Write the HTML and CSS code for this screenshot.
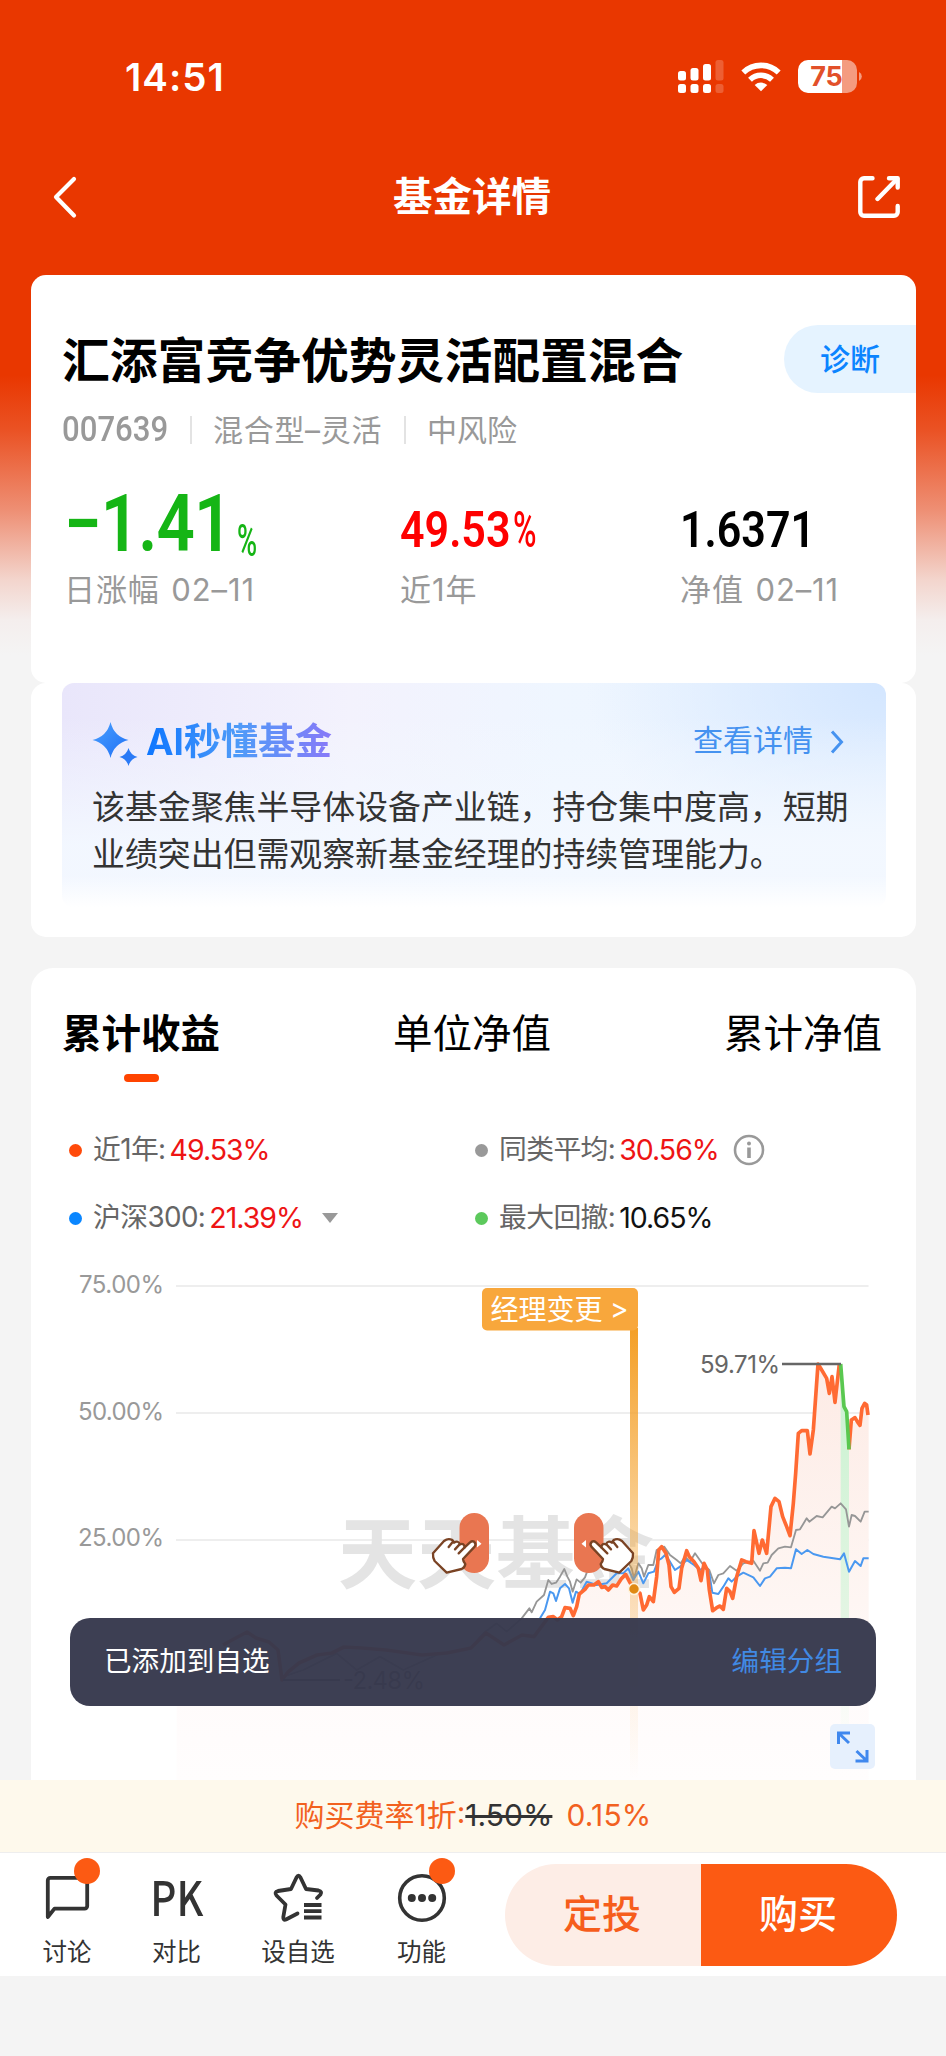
FILE: index.html
```html
<!DOCTYPE html>
<html lang="zh-CN">
<head>
    <meta charset="UTF-8">
    <meta name="viewport" content="width=device-width, initial-scale=1.0">
    <title>基金详情</title>
    <link rel="stylesheet" href="styles.css">
</head>
<body>
    <header class="status-bar">
        <span class="time">14:51</span>
        <svg class="status-icons" width="190" height="40" viewBox="675 57 190 40">
            <g fill="#fff">
                <rect x="678" y="71" width="8" height="9.5" rx="2.5"/>
                <rect x="690.5" y="68" width="8" height="12.5" rx="2.5"/>
                <rect x="703" y="64" width="8" height="16.5" rx="2.5"/>
                <rect x="678" y="84" width="8" height="9" rx="2.5"/>
                <rect x="690.5" y="84" width="8" height="9" rx="2.5"/>
                <rect x="703" y="84" width="8" height="9" rx="2.5"/>
            </g>
            <g fill="#fff" opacity="0.2">
                <rect x="715.5" y="60" width="8" height="20.5" rx="2.5"/>
                <rect x="715.5" y="84" width="8" height="9" rx="2.5"/>
            </g>
            <!-- wifi -->
            <g fill="none" stroke="#fff" stroke-width="5.6">
                <path d="M743.3 72.5 a25.5 25.5 0 0 1 35.4 0"/>
                <path d="M750 79.7 a16 16 0 0 1 22 0"/>
            </g>
            <path d="M761 91.2 l-6.3 -6.2 a9.5 9.5 0 0 1 12.6 0 z" fill="#fff"/>
            <!-- battery -->
            <path d="M808 60 h34 v33 h-34 a10 10 0 0 1 -10 -10 v-13 a10 10 0 0 1 10 -10z" fill="#fff"/>
            <path d="M842 60 h5 a10 10 0 0 1 10 10 v13 a10 10 0 0 1 -10 10 h-5z" fill="#fff" opacity="0.5"/>
            <path d="M859 72 a5 5 0 0 1 0 9z" fill="#fff" opacity="0.5"/>
            <text x="826.5" y="86" text-anchor="middle" class="battery-text">75</text>
        </svg>
    </header>

    <nav class="nav-bar">
        <svg width="42" height="46" viewBox="0 0 42 46">
            <path d="M26 5 L8 23 L26 41.5" fill="none" stroke="#fff" stroke-width="4.2" stroke-linecap="round" stroke-linejoin="round"/>
        </svg>
        <h1>基金详情</h1>
        <svg width="42" height="42" viewBox="0 0 42 42">
            <g fill="none" stroke="#fff" stroke-width="4.4" stroke-linecap="round" stroke-linejoin="round">
                <path d="M14.5 2.3 H6 a3.7 3.7 0 0 0 -3.7 3.7 V36 a3.7 3.7 0 0 0 3.7 3.7 H36 a3.7 3.7 0 0 0 3.7 -3.7 V30"/>
                <path d="M31 2.3 H39.7 V11.5"/>
                <path d="M39 3 L19.5 23"/>
            </g>
        </svg>
    </nav>

    <section class="card fund-card">
        <div class="fund-head">
            <h2>汇添富竞争优势灵活配置混合</h2>
            <span class="diagnose">诊断</span>
        </div>
        <div class="fund-meta">
            <span class="code">007639</span>
            <i class="sep"></i>
            <span class="type">混合型–灵活</span>
            <i class="sep"></i>
            <span class="risk">中风险</span>
        </div>
        <div class="stats">
            <div>
                <div class="value big"><span class="num">−1.41</span><span class="pct">%</span></div>
                <div class="label">日涨幅 02–11</div>
            </div>
            <div>
                <div class="value up"><span class="num">49.53</span><span class="pct">%</span></div>
                <div class="label">近1年</div>
            </div>
            <div>
                <div class="value"><span class="num">1.6371</span></div>
                <div class="label">净值 02–11</div>
            </div>
        </div>
    </section>

    <section class="card ai-card">
        <div class="ai-box">
            <div class="ai-head">
                <svg width="48" height="48" viewBox="0 0 48 48">
                    <defs>
                        <linearGradient id="spark" x1="0" y1="0" x2="1" y2="1">
                            <stop offset="0" stop-color="#4aa0ff"/>
                            <stop offset="1" stop-color="#1f70f5"/>
                        </linearGradient>
                    </defs>
                    <path d="M18.5 1 Q22 15.5 36.5 19 Q22 22.5 18.5 37 Q15 22.5 0.5 19 Q15 15.5 18.5 1z" fill="url(#spark)"/>
                    <path d="M36.5 27 Q38.5 34 45.5 36 Q38.5 38 36.5 45 Q34.5 38 27.5 36 Q34.5 34 36.5 27z" fill="#2a7af6"/>
                </svg>
                <h3>AI秒懂基金</h3>
                <a>查看详情</a>
                <svg class="arrow" width="14" height="26" viewBox="0 0 14 26">
                    <path d="M2 2.5 L11.5 13 L2 23.5" fill="none" stroke="#4592f0" stroke-width="3"/>
                </svg>
            </div>
            <p>该基金聚焦半导体设备产业链，持仓集中度高，短期业绩突出但需观察新基金经理的持续管理能力。</p>
        </div>
    </section>

    <section class="card chart-card">
        <div class="tabs">
            <span class="tab active">累计收益</span>
            <span class="tab">单位净值</span>
            <span class="tab">累计净值</span>
        </div>
        <div class="legend">
            <div><i class="dot orange"></i>近1年:<b class="up">49.53%</b></div>
            <div><i class="dot gray"></i>同类平均:<b class="up">30.56%</b>
                <svg class="info" width="32" height="32" viewBox="0 0 32 32">
                    <circle cx="16" cy="16" r="14" fill="none" stroke="#999" stroke-width="2.6"/>
                    <circle cx="16" cy="9.5" r="2" fill="#999"/>
                    <path d="M16 13.5 V24" stroke="#999" stroke-width="3.6"/>
                </svg>
            </div>
            <div><i class="dot blue"></i>沪深300:<b class="up">21.39%</b><i class="caret"></i></div>
            <div><i class="dot green"></i>最大回撤:<b>10.65%</b></div>
        </div>

        <div class="chart">
            <svg width="885" height="540" viewBox="31 1240 885 540">
                <defs>
                    <linearGradient id="area" gradientUnits="userSpaceOnUse" x1="0" y1="370" x2="0" y2="1620">
                        <stop offset="0" stop-color="#fdebe5"/>
                        <stop offset="0.57" stop-color="#fef6f3"/>
                        <stop offset="0.8" stop-color="#fffbfb"/>
                        <stop offset="1" stop-color="#fffdfd"/>
                    </linearGradient>
                    <linearGradient id="pole" x1="0" y1="0" x2="0" y2="1">
                        <stop offset="0" stop-color="#f49f26"/>
                        <stop offset="0.5" stop-color="#f49f26" stop-opacity="0.4"/>
                        <stop offset="0.82" stop-color="#f49f26" stop-opacity="0.08"/>
                        <stop offset="1" stop-color="#f49f26" stop-opacity="0"/>
                    </linearGradient>
                    <linearGradient id="drop" x1="0" y1="0" x2="0" y2="1">
                        <stop offset="0" stop-color="#c9f2d0"/>
                        <stop offset="0.6" stop-color="#e3f5e3"/>
                        <stop offset="1" stop-color="#f8fff8" stop-opacity="0"/>
                    </linearGradient>
                </defs>

                <!-- grid -->
                <g stroke="#eee" stroke-width="2">
                    <path d="M176 1286 H868.5 M176 1413 H868.5 M176 1540 H868.5"/>
                </g>
                <g class="axis" text-anchor="end">
                    <text x="164" y="1292.5" textLength="85">75.00%</text>
                    <text x="164" y="1419.5" textLength="86">50.00%</text>
                    <text x="164" y="1546" textLength="86">25.00%</text>
                </g>

                <text x="338" y="1583" class="watermark" textLength="316">天天基金</text>

                <!-- curves, 3 units per pixel -->
                <g transform="translate(470 1240) scale(0.33333)" fill="none" stroke-linejoin="round">
                    <path fill="url(#area)" d="M-880 1270 L-741 1215 -714 1200 -669 1176 -603 1206 -564 1320 -510 1270 -414 1239 -144 1245 3 1224 48 1179 102 1215 192 1190 235 1132 250 1130 275 1130 285 1103 310 1127 328 1062 355 1035 385 1025 415 1050 467 1003 492 1048 510 1060 520 1110 538 1070 550 1085 566 930 575 920 597 975 603 1040 613 1057 627 1045 650 932 685 985 693 1022 702 970 728 1112 750 1098 760 1108 770 1045 788 1075 815 960 845 970 852 872 867 940 877 900 890 940 903 800 915 775 938 830 960 887 985 580 1012 572 1020 642 1044 372 1070 415 1078 460 1086 410 1095 487 1110 372 1122 500 1137 628 1144 540 1170 556 1184 490 1196 525 V1620 H-880z"/>
                    <path fill="url(#drop)" d="M1112 400 L1122 500 1130 515 1137 628 V1600 H1112z"/>
                    <polyline stroke="#969696" stroke-width="5.5" points="-560,1310 -500,1290 -400,1240 -340,1290 -270,1250 -200,1290 -90,1240 0,1225 40,1180 80,1150 110,1175 155,1135 178,1105 185,1117 200,1085 222,1065 235,1020 245,1032 258,1028 270,1010 283,987 292,1010 300,1025 308,1055 320,1018 332,1028 345,1012 355,985 400,980 440,970 470,960 485,985 492,1015 505,970 515,985 522,1010 535,975 550,975 560,930 583,920 600,945 620,960 632,970 645,950 660,965 675,940 700,975 718,990 732,1030 745,1005 760,1000 780,978 800,992 820,970 850,962 870,992 880,970 893,968 905,945 925,925 945,920 963,922 978,870 990,868 1010,835 1018,845 1040,828 1058,832 1085,800 1095,805 1112,790 1128,808 1137,860 1145,825 1155,828 1172,845 1184,815 1196,815"/>
                    <polyline stroke="#4a98f0" stroke-width="6" points="210,1135 225,1110 240,1055 250,1060 258,1083 270,1045 285,1032 297,1045 308,1088 318,1055 330,1062 350,1025 380,1035 410,1030 440,1000 460,1000 475,985 490,1020 505,995 520,1030 535,1000 552,995 565,960 575,955 585,945 600,965 615,990 630,980 650,960 672,975 690,990 705,980 718,1000 727,1058 745,1062 760,1040 775,1015 785,1025 800,1010 820,998 850,1012 870,1038 885,1015 900,1010 920,985 945,983 963,985 978,928 995,942 1012,930 1030,942 1060,950 1110,958 1122,940 1137,995 1155,963 1172,978 1180,955 1196,955"/>
                    <polyline stroke="#ff6a33" stroke-width="11" points="-741,1215 -714,1200 -669,1176 -642,1194 -603,1206 -576,1230 -564,1320 -546,1296 -513,1269 -459,1245 -414,1239 -378,1221 -324,1224 -252,1230 -144,1245 -69,1239 3,1224 48,1179 102,1215 156,1185 192,1190 235,1132 250,1130 262,1140 275,1130 285,1103 300,1105 310,1127 320,1100 328,1062 345,1048 355,1035 372,1035 385,1025 395,1042 405,1040 415,1050 428,1035 440,1038 455,1015 467,1003 480,1028 492,1048 510,1060 520,1110 530,1095 538,1070 550,1085 560,1010 566,930 575,920 588,940 597,975 603,1040 613,1057 627,1045 635,985 650,932 658,950 672,965 685,985 693,1022 702,970 712,990 718,1050 728,1112 740,1103 750,1098 760,1108 770,1045 780,1055 788,1075 800,1010 815,960 828,965 845,970 852,872 867,940 877,900 890,940 903,800 915,775 927,785 938,830 950,860 960,887 970,790 977,700 985,580 995,572 1012,572 1020,642 1030,570 1044,372 1052,385 1070,415 1078,460 1086,410 1095,487 1108,372"/>
                    <polyline stroke="#ff6a33" stroke-width="11" points="1137,628 1144,540 1155,533 1162,545 1170,556 1176,505 1184,490 1190,495 1194,525"/>
                    <polyline stroke="#5ac850" stroke-width="11" points="1112,372 1118,450 1122,500 1130,515 1137,628"/>
                </g>

                <path d="M782 1364 H841" stroke="#666" stroke-width="2.4"/>
                <text x="700" y="1372.5" class="peak" textLength="80">59.71%</text>
                <path d="M283 1680 H340" stroke="#666" stroke-width="2"/>
                <text x="343" y="1689" class="peak" textLength="82">-2.48%</text>

                <!-- manager change flag -->
                <rect x="630" y="1328" width="8" height="452" fill="url(#pole)"/>
                <rect x="482" y="1288" width="156" height="42.5" rx="5" fill="#f8a73c"/>
                <text x="490.5" y="1319.5" class="flag">经理变更</text>
                <text x="610" y="1319" class="flag">&gt;</text>
                <circle cx="634" cy="1589" r="5.5" fill="#e08a12" stroke="#fff3dc" stroke-width="1.6"/>

                <!-- drag hints -->
                <rect x="459.5" y="1513" width="29.5" height="60" rx="14.7" fill="#e97651"/>
                <rect x="574" y="1513" width="29.5" height="60" rx="14.7" fill="#e97651"/>
                <path d="M477 1540 l4.5 3.8 -4.5 3.8z M586 1540 l-4.5 3.8 4.5 3.8z" fill="#fff"/>
                <g fill="#fff" stroke="#7a4324" stroke-width="7" stroke-linejoin="round" stroke-linecap="round">
                    <g transform="translate(330 1490) scale(0.33333)">
                        <path d="M432 155 Q440 162 434 170 L399 207 Q400 216 406 222 Q404 234 395 237 L350 248 L314 213 Q308 204 309 190 L342 153 Q352 145 362 148 Q370 150 372 158 Q384 150 390 163 Q402 158 404 172 L420 157 Q426 152 432 155z"/>
                        <path d="M368 156 L356 171 M388 164 L375 178 M404 172 L386 190" fill="none"/>
                    </g>
                    <g transform="translate(736 1490) scale(-0.33333 0.33333)">
                        <path d="M432 155 Q440 162 434 170 L399 207 Q400 216 406 222 Q404 234 395 237 L350 248 L314 213 Q308 204 309 190 L342 153 Q352 145 362 148 Q370 150 372 158 Q384 150 390 163 Q402 158 404 172 L420 157 Q426 152 432 155z"/>
                        <path d="M368 156 L356 171 M388 164 L375 178 M404 172 L386 190" fill="none"/>
                    </g>
                </g>
            </svg>

            <div class="expand">
                <svg width="45" height="45" viewBox="0 0 45 45">
                    <g fill="none" stroke="#4088ee" stroke-width="3">
                        <path d="M8.5 20 V9 H20 M8.5 9 L19 19"/>
                        <path d="M37 26 V37 H25.5 M37 37 L26.5 27"/>
                    </g>
                </svg>
            </div>
            <div class="toast">
                <span>已添加到自选</span>
                <a>编辑分组</a>
            </div>
        </div>
    </section>

    <div class="fee-bar">购买费率1折:<s>1.50%</s><span>0.15%</span></div>

    <footer class="bottom-bar">
        <div class="actions">
            <div class="action">
                <svg width="50" height="50" viewBox="42 1873 50 50">
                    <path d="M47.8 1917 V1880.5 a2.6 2.6 0 0 1 2.6 -2.6 H84.6 a2.6 2.6 0 0 1 2.6 2.6 V1906 a2.6 2.6 0 0 1 -2.6 2.6 H54.5z" fill="none" stroke="#333" stroke-width="3.8" stroke-linejoin="round"/>
                </svg>
                <i class="badge"></i>
                <span>讨论</span>
            </div>
            <div class="action">
                <div class="pk">PK</div>
                <span>对比</span>
            </div>
            <div class="action">
                <svg width="54" height="50" viewBox="272 1873 54 50">
                    <g fill="none" stroke="#333" stroke-width="3.8" stroke-linecap="round" stroke-linejoin="round">
                        <path d="M298.5 1913.5 L287 1919.5 Q284 1920.5 284.3 1917 L286.5 1904.5 L277.5 1895.5 Q275 1892 279 1891 L292 1889 L297.5 1877.5 Q299.5 1874 301.5 1877.5 L307 1889 L319.5 1890.5 Q323.5 1891.5 321.5 1894.5 L318 1898"/>
                    </g>
                    <path d="M305 1905 H322.5 M305 1911.2 H322.5 M305 1917.5 H322.5" stroke="#333" stroke-width="3.8"/>
                </svg>
                <span>设自选</span>
            </div>
            <div class="action">
                <svg width="50" height="50" viewBox="0 0 50 50">
                    <circle cx="25" cy="25" r="22.3" fill="none" stroke="#333" stroke-width="3.6"/>
                    <g fill="#333"><circle cx="14.8" cy="25" r="4"/><circle cx="25" cy="25" r="4"/><circle cx="35.2" cy="25" r="4"/></g>
                </svg>
                <i class="badge"></i>
                <span>功能</span>
            </div>
        </div>
        <div class="buttons">
            <button class="plan">定投</button>
            <button class="buy">购买</button>
        </div>
    </footer>
</body>
</html>
```
FILE: styles.css
```css
* {
    box-sizing: border-box;
}

body {
    margin: 0;
    width: 946px;
    height: 2056px;
    overflow: hidden;
    font-family: "Inter", "Noto Sans CJK SC", sans-serif;
    line-height: 1.2;
    color: #000;
    background: #f4f4f4 linear-gradient(to bottom, #e93700 0, #e93700 375px, #ea5224 430px, #ee8f74 510px, #f3d5cd 580px, #f4eeed 620px, #f4f4f4 655px) no-repeat;
}

h1, h2, h3, p {
    margin: 0;
}

svg {
    display: block;
}

/* status bar */
.status-bar {
    height: 154px;
    padding: 0 81px 0 125px;
    display: flex;
    align-items: center;
    justify-content: space-between;
}

.time {
    color: #fff;
    font-size: 38.5px;
    font-weight: 600;
    line-height: 40px;
    letter-spacing: 1px;
}

.battery-text {
    font-family: "Inter", sans-serif;
    font-size: 27px;
    font-weight: 700;
    fill: #e2502a;
}

/* title bar */
.nav-bar {
    height: 86px;
    padding: 0 46px 0 48px;
    display: flex;
    align-items: center;
    justify-content: space-between;
}

.nav-bar h1 {
    margin-right: 4px;
    color: #fff;
    font-size: 39.5px;
    font-weight: 700;
    line-height: 48px;
}

.card {
    width: 885px;
    margin-left: 31px;
    background: #fff;
    border-radius: 15px;
}

/* fund summary */
.fund-card {
    margin-top: 35px;
    height: 408px;
    padding: 50px 0 0 31px;
}

.fund-head {
    display: flex;
    height: 68px;
    align-items: center;
    justify-content: space-between;
}

.fund-head h2 {
    font-size: 47.8px;
    font-weight: 700;
    line-height: 60px;
    padding-top: 4px;
}

.diagnose {
    width: 132px;
    height: 68px;
    line-height: 68px;
    text-align: center;
    font-size: 30px;
    font-weight: 500;
    color: #0b84ff;
    background: #e5f3ff;
    border-radius: 34px 0 0 34px;
}

.fund-meta {
    display: flex;
    align-items: center;
    height: 40px;
    margin-top: 17px;
    font-size: 30px;
    color: #999;
}

.code {
    width: 128px;
    font-family: Roboto, sans-serif;
    font-size: 35px;
    font-weight: 500;
    transform: scaleX(0.89);
    transform-origin: left;
}

.sep {
    width: 2px;
    height: 28px;
    margin-right: 21px;
    background: #e3e3e3;
}

.type {
    width: 191px;
    letter-spacing: 0.7px;
}

.stats {
    display: grid;
    grid-template-columns: 336px 280px auto;
    margin-top: 36px;
    padding-left: 2px;
}

.value {
    display: flex;
    height: 72px;
    line-height: 88px;
    font-family: Roboto, sans-serif;
    font-size: 50px;
    font-weight: 600;
}

.value .num,
.value .pct {
    transform: scaleX(0.86);
    transform-origin: left;
}

.value.up {
    color: #fe0000;
}

.value.up .num {
    width: 113px;
}

.value.up .pct {
    font-weight: 500;
    transform: scaleX(0.64);
}

.value.big {
    color: #15b515;
    font-size: 80px;
    line-height: 76px;
}

.value.big .num {
    width: 173px;
    letter-spacing: -1px;
    transform: scaleX(0.84);
}

.value.big .pct {
    font-size: 44px;
    font-weight: 500;
    line-height: 111px;
    transform: scaleX(0.62);
}

.label {
    margin-top: 10px;
    font-size: 31px;
    line-height: 44px;
    color: #999;
    letter-spacing: 0.9px;
    word-spacing: 2px;
}

/* ai summary */
.ai-card {
    height: 254px;
    padding: 0 30px 0 31px;
}

.ai-box {
    height: 224px;
    padding: 33px 26px 0 30px;
    border-radius: 12px;
    background:
        linear-gradient(to bottom, rgba(255, 255, 255, 0) 86%, #fff 100%),
        linear-gradient(to bottom, rgba(243, 248, 255, 0) 15%, rgba(243, 248, 255, 0.95) 72%),
        radial-gradient(ellipse 300px 200px at 100% 0, #d3e6ff, rgba(211, 230, 255, 0)),
        linear-gradient(to right, #e9e6fb 0, #f3f2fd 35%, #eff6ff 60%, #edf5ff 100%);
}

.ai-head {
    display: flex;
    align-items: center;
    height: 52px;
}

.ai-head > svg:first-child {
    margin-top: 6px;
}

.ai-head h3 {
    margin: 0 auto 0 6px;
    font-size: 37px;
    font-weight: 700;
    line-height: 52px;
    background: linear-gradient(to right, #0d76ff 0, #4f9bf8 50%, #8879f8 100%);
    -webkit-background-clip: text;
    background-clip: text;
    color: transparent;
}

.ai-head a {
    margin-top: -4px;
    font-size: 30px;
    color: #4592f0;
}

.ai-head .arrow {
    margin: -1px 16px 0 17px;
}

.ai-box p {
    margin-top: 16px;
    font-size: 32.9px;
    line-height: 47px;
    color: #333;
}

/* performance chart */
.chart-card {
    height: 812px;
    margin-top: 31px;
    border-radius: 22px 22px 0 0;
}

.tabs {
    display: flex;
    justify-content: space-between;
    height: 132px;
    padding: 40px 34px 0 31px;
    font-size: 39.5px;
    line-height: 52px;
}

.tab.active {
    font-weight: 700;
}

.tab.active::after {
    content: "";
    display: block;
    width: 35px;
    height: 8px;
    margin: 14px auto 0;
    border-radius: 4px;
    background: #ff4400;
}

.legend {
    display: grid;
    grid-template-columns: 406px auto;
    grid-auto-rows: 68px;
    height: 140px;
    padding: 16px 0 0 38px;
    font-size: 27.8px;
    letter-spacing: -0.6px;
    color: #666;
}

.legend div {
    display: flex;
    align-items: center;
}

.legend b {
    margin-left: 4px;
    font-weight: 400;
    font-size: 28.5px;
    letter-spacing: -1px;
    color: #111;
}

.legend .up {
    color: #ee1414;
}

.dot {
    width: 13px;
    height: 13px;
    margin-right: 11px;
    border-radius: 50%;
}

.orange { background: #ff4a0a; }
.gray { background: #999; }
.blue { background: #0a86ff; }
.green { background: #5cc95c; }

.info {
    margin-left: 14px;
}

.caret {
    margin-left: 19px;
    border: 8px solid transparent;
    border-top: 10px solid #999;
    border-bottom: 0;
}

.chart {
    position: relative;
    height: 540px;
}

.axis,
.peak {
    font-family: "Inter", sans-serif;
    font-size: 24px;
    fill: #999;
}

.peak {
    fill: #666;
}

.watermark {
    font-family: "Noto Sans CJK SC", sans-serif;
    font-size: 79px;
    font-weight: 700;
    fill: #e4e4e4;
}

.flag {
    font-family: "Inter", "Noto Sans CJK SC", sans-serif;
    font-size: 28px;
    fill: #fff;
}

.expand {
    position: absolute;
    left: 799px;
    top: 484px;
    border-radius: 5px;
    background: #e6f0fd;
}

.toast {
    position: absolute;
    left: 39px;
    top: 378px;
    width: 806px;
    height: 88px;
    padding: 0 34px;
    display: flex;
    align-items: center;
    justify-content: space-between;
    border-radius: 20px;
    background: rgba(55, 57, 77, 0.97);
    color: #fff;
    font-size: 27.6px;
}

.toast a {
    color: #4189e3;
}

/* fee notice */
.fee-bar {
    height: 73px;
    border-bottom: 1px solid #eee;
    background: #fef9ec;
    color: #f2611f;
    font-size: 30px;
    line-height: 71px;
    text-align: center;
}

.fee-bar s {
    color: #333;
}

.fee-bar span {
    margin-left: 14px;
    letter-spacing: 0.2px;
}

/* bottom actions */
.bottom-bar {
    display: flex;
    justify-content: space-between;
    height: 123px;
    padding: 11px 49px 0 12px;
    background: #fff;
}

.actions {
    display: grid;
    grid-template-columns: 110px 109px 134px 113px;
}

.action {
    position: relative;
    display: flex;
    flex-direction: column;
    align-items: center;
    padding-top: 9px;
    font-size: 24.5px;
    line-height: 34px;
    color: #333;
}

.action span {
    margin-top: 12px;
}

.pk {
    height: 50px;
    font-family: "Noto Sans CJK SC", sans-serif;
    font-size: 47px;
    font-weight: 500;
    line-height: 46px;
    transform: scaleX(0.86);
}

.badge {
    position: absolute;
    left: 50%;
    top: -6px;
    width: 26px;
    height: 26px;
    margin-left: 7px;
    border-radius: 50%;
    background: #fc5a13;
}

.buttons {
    display: flex;
    height: 102px;
}

.buttons button {
    width: 196px;
    border: none;
    padding: 0 2px 2px 0;
    font-family: inherit;
    font-size: 39px;
    line-height: 48px;
    font-weight: 500;
}

.plan {
    border-radius: 51px 0 0 51px;
    background: #fdede6;
    color: #f65d1c;
}

.buy {
    border-radius: 0 51px 51px 0;
    background: #fc5a13;
    color: #fff;
}
```
